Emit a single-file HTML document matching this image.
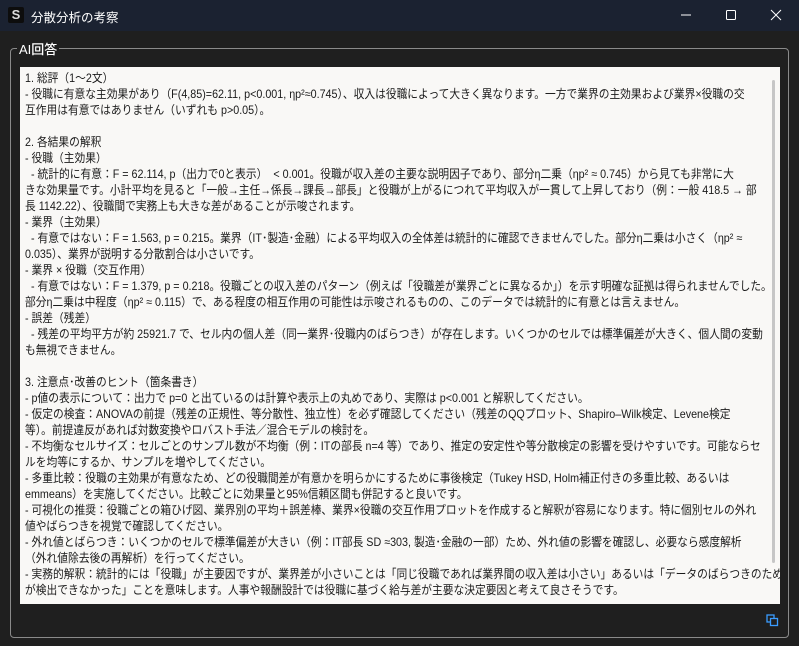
<!DOCTYPE html>
<html><head><meta charset="utf-8"><style>
*{margin:0;padding:0;box-sizing:border-box}
body{width:799px;height:646px;background:#1f1f1f;font-family:"Segoe UI","Liberation Sans","Noto Sans CJK JP",sans-serif;overflow:hidden;position:relative}
.tb{position:absolute;left:0;top:0;width:799px;height:31px;background:#1b2231;color:#fff}
.ic{position:absolute;left:8px;top:7px;width:16px;height:16px;background:#0d0d0d;border-radius:2px;color:#ddd;font:bold 13px "Liberation Sans",sans-serif;text-align:center;line-height:16px}
.tt{position:absolute;left:31px;top:7px;font-size:12.5px}
.gb{position:absolute;left:10px;top:48px;width:779px;height:590px;border:1px solid #8a8a8a;border-radius:4px}
.gl{position:absolute;left:17px;top:39px;background:#1f1f1f;color:#fff;font-size:13px;padding:0 2px;font-weight:500}
.ta{position:absolute;left:20px;top:67px;width:760px;height:537px;background:#f9f8f6;color:#1a1a1a;font-size:12px;padding:3px 0 0 5px;overflow:hidden}
.in{transform:scaleX(0.895);transform-origin:0 0;width:900px}
.ta div div{height:16px;line-height:16px;white-space:pre}
.sb{position:absolute;left:772px;top:80px;width:3px;height:483px;background:#c6c6c6;border-radius:2px}
</style></head><body>
<div class="tb"><div class="ic">S</div><div class="tt">分散分析の考察</div>
<svg style="position:absolute;left:680px;top:8px" width="112" height="14" viewBox="0 0 112 14" stroke="#fff" stroke-width="1" fill="none">
<line x1="1" y1="7" x2="11" y2="7"/><rect x="46.5" y="2.5" width="9" height="9" rx="1"/><path d="M91 2l10 10M101 2l-10 10"/></svg></div>
<div class="gb"></div><div class="gl">AI回答</div>
<div class="ta"><div class="in">
<div>1. 総評（1〜2文）</div>
<div>- 役職に有意な主効果があり（F(4,85)=62.11, p&lt;0.001, ηp²≈0.745）、収入は役職によって大きく異なります。一方で業界の主効果および業界×役職の交</div>
<div>互作用は有意ではありません（いずれも p&gt;0.05）。</div>
<div> </div>
<div>2. 各結果の解釈</div>
<div>- 役職（主効果）</div>
<div>  - 統計的に有意：F = 62.114, p（出力で0と表示）  &lt; 0.001。役職が収入差の主要な説明因子であり、部分η二乗（ηp² ≈ 0.745）から見ても非常に大</div>
<div>きな効果量です。小計平均を見ると「一般→主任→係長→課長→部長」と役職が上がるにつれて平均収入が一貫して上昇しており（例：一般 418.5 → 部</div>
<div>長 1142.22）、役職間で実務上も大きな差があることが示唆されます。</div>
<div>- 業界（主効果）</div>
<div>  - 有意ではない：F = 1.563, p = 0.215。業界（IT･製造･金融）による平均収入の全体差は統計的に確認できませんでした。部分η二乗は小さく（ηp² ≈</div>
<div>0.035）、業界が説明する分散割合は小さいです。</div>
<div>- 業界 × 役職（交互作用）</div>
<div>  - 有意ではない：F = 1.379, p = 0.218。役職ごとの収入差のパターン（例えば「役職差が業界ごとに異なるか」）を示す明確な証拠は得られませんでした。</div>
<div>部分η二乗は中程度（ηp² ≈ 0.115）で、ある程度の相互作用の可能性は示唆されるものの、このデータでは統計的に有意とは言えません。</div>
<div>- 誤差（残差）</div>
<div>  - 残差の平均平方が約 25921.7 で、セル内の個人差（同一業界･役職内のばらつき）が存在します。いくつかのセルでは標準偏差が大きく、個人間の変動</div>
<div>も無視できません。</div>
<div> </div>
<div>3. 注意点･改善のヒント（箇条書き）</div>
<div>- p値の表示について：出力で p=0 と出ているのは計算や表示上の丸めであり、実際は p&lt;0.001 と解釈してください。</div>
<div>- 仮定の検査：ANOVAの前提（残差の正規性、等分散性、独立性）を必ず確認してください（残差のQQプロット、Shapiro–Wilk検定、Levene検定</div>
<div>等）。前提違反があれば対数変換やロバスト手法／混合モデルの検討を。</div>
<div>- 不均衡なセルサイズ：セルごとのサンプル数が不均衡（例：ITの部長 n=4 等）であり、推定の安定性や等分散検定の影響を受けやすいです。可能ならセ</div>
<div>ルを均等にするか、サンプルを増やしてください。</div>
<div>- 多重比較：役職の主効果が有意なため、どの役職間差が有意かを明らかにするために事後検定（Tukey HSD, Holm補正付きの多重比較、あるいは</div>
<div>emmeans）を実施してください。比較ごとに効果量と95%信頼区間も併記すると良いです。</div>
<div>- 可視化の推奨：役職ごとの箱ひげ図、業界別の平均＋誤差棒、業界×役職の交互作用プロットを作成すると解釈が容易になります。特に個別セルの外れ</div>
<div>値やばらつきを視覚で確認してください。</div>
<div>- 外れ値とばらつき：いくつかのセルで標準偏差が大きい（例：IT部長 SD ≈303, 製造･金融の一部）ため、外れ値の影響を確認し、必要なら感度解析</div>
<div>（外れ値除去後の再解析）を行ってください。</div>
<div>- 実務的解釈：統計的には「役職」が主要因ですが、業界差が小さいことは「同じ役職であれば業界間の収入差は小さい」あるいは「データのばらつきのため差</div>
<div>が検出できなかった」ことを意味します。人事や報酬設計では役職に基づく給与差が主要な決定要因と考えて良さそうです。</div>
</div></div>
<div class="sb"></div>
<svg style="position:absolute;left:766px;top:614px" width="13" height="13" viewBox="0 0 13 13" fill="none" stroke="#3b9cff" stroke-width="1.3"><rect x="1" y="1" width="7" height="7"/><rect x="4.5" y="4.5" width="7" height="7" fill="#1f1f1f"/></svg>
</body></html>
